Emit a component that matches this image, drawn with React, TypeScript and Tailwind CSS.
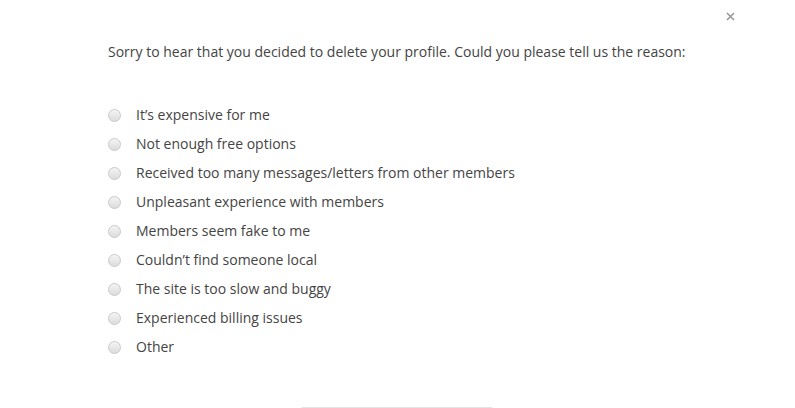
import React from "react";

const reasons = [
  "It’s expensive for me",
  "Not enough free options",
  "Received too many messages/letters from other members",
  "Unpleasant experience with members",
  "Members seem fake to me",
  "Couldn’t find someone local",
  "The site is too slow and buggy",
  "Experienced billing issues",
  "Other",
];

export default function App() {
  return (
    <div className="relative h-[408px] w-[795px] overflow-hidden bg-white font-['Open_Sans',sans-serif] text-[#444]">
      <button className="absolute left-[725px] top-[11px] flex h-[11px] w-[11px] items-center justify-center text-[#999]">
        <svg width="9" height="9" viewBox="0 0 9 9">
          <path d="M1 1L8 8M8 1L1 8" stroke="currentColor" strokeWidth="1.6" />
        </svg>
      </button>
      <div className="pl-[108px] pt-[42px]">
        <p className="text-[14px] leading-[20px]">
          Sorry to hear that you decided to delete your profile. Could you please tell us the reason:
        </p>
        <ul className="mt-[43px] flex flex-col gap-[9px]">
          {reasons.map((r) => (
            <li key={r} className="flex h-[20px] items-center">
              <span className="h-[13px] w-[13px] rounded-full border border-[#c9c9c9] bg-gradient-to-b from-[#f4f4f4] to-[#dcdcdc]" />
              <span className="ml-[15px] text-[14px] leading-[20px]">{r}</span>
            </li>
          ))}
        </ul>
        <div className="ml-[193px] mt-[50px] h-[10px] w-[192px] rounded-t-[2px] border-t-2 border-[#e3e3e3]" />
      </div>
    </div>
  );
}
